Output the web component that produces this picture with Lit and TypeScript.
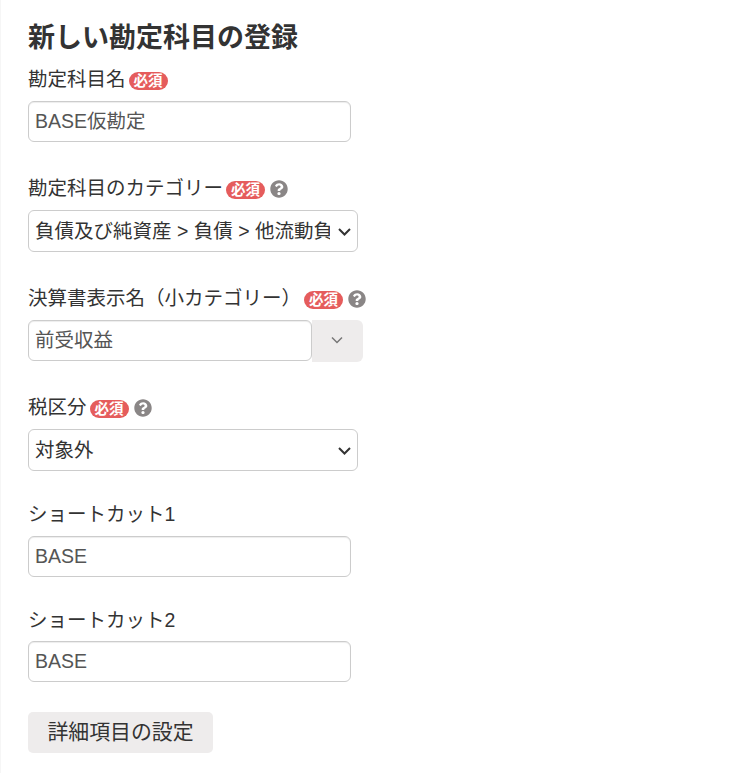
import { LitElement, html, css } from "lit";
import { customElement } from "lit/decorators.js";

@customElement("app-root")
export class AppRoot extends LitElement {
  static styles = css`
    :host {
      display: block;
      height: 773px;
      overflow: hidden;
      background: #fff;
      color: #333;
      font-family: "Liberation Sans", Arial, "Noto Sans CJK JP", sans-serif;
      font-size: 19.5px;
      box-sizing: border-box;
      padding: 21px 28px 0 27px;
      border-left: 1px solid #f6f6f6;
    }
    h1 {
      margin: 0 0 8px;
      font-size: 27px;
      line-height: 34px;
      font-weight: 700;
      color: #333;
    }
    .group { margin-bottom: 30px; }
    .group.after-select { margin-bottom: 31px; }
    label {
      display: flex;
      align-items: center;
      box-sizing: border-box;
      height: 31px;
      padding-top: 2px;
      line-height: 29px;
      margin-bottom: 7px;
      white-space: nowrap;
    }
    label.plain {
      height: 24px;
      padding-top: 0;
      line-height: 24px;
      margin-bottom: 10px;
    }
    label.plain.low {
      height: 26px;
      line-height: 26px;
      margin-bottom: 8px;
    }
    .badge {
      display: inline-flex;
      align-items: center;
      justify-content: center;
      width: 39px;
      height: 18px;
      border-radius: 9px;
      margin: 2px 0 0 3px;
      background: #e55c5c;
      color: #fff;
      font-size: 14.5px;
      font-weight: 700;
      line-height: 18px;
    }
    .help { display: block; margin-left: 5px; width: 18px; height: 18px; fill: #8a8686; }
    .input, select {
      display: block;
      box-sizing: border-box;
      font: inherit;
      border: 1px solid #ccc;
      border-radius: 6px;
      background-color: #fff;
      height: 41px;
      margin: 0;
      padding: 0 6px;
    }
    .input {
      width: 323px;
      color: #555;
      box-shadow: inset 0 1px 1px rgba(0, 0, 0, 0.075);
    }
    .input.cjk { padding-bottom: 4px; }
    .select-wrap { position: relative; width: 330px; }
    select {
      appearance: none;
      width: 330px;
      height: 42px;
      color: #333;
      padding-right: 27px;
    }
    .chevron {
      position: absolute;
      right: 7px;
      top: 18px;
      display: block;
      width: 13px;
      height: 8px;
      pointer-events: none;
    }
    .combo { display: flex; align-items: flex-start; height: 41px; }
    .combo .input { width: 284px; }
    .toggle {
      display: flex;
      align-items: center;
      justify-content: center;
      width: 51px;
      height: 42px;
      padding: 0 2px 2px 0;
      border: 0;
      border-radius: 0 6px 6px 0;
      background: #eeecec;
    }
    .toggle svg { display: block; width: 12px; height: 8px; }
    .detail {
      display: block;
      box-sizing: border-box;
      width: 185px;
      height: 41px;
      padding: 0 0 5px;
      border: 0;
      border-radius: 5px;
      background: #eeecec;
      color: #333;
      font-family: inherit;
      font-size: 20.9px;
    }
  `;

  private badge() {
    return html`<span class="badge">必須</span>`;
  }

  private help() {
    return html`<svg class="help" viewBox="0 0 512 512" aria-hidden="true">
      <path d="M504 256c0 136.997-111.043 248-248 248S8 392.997 8 256C8 119.083 119.043 8 256 8s248 111.083 248 248zM262.655 90c-54.497 0-89.255 22.957-116.549 63.758-3.536 5.286-2.353 12.415 2.715 16.258l34.699 26.31c5.205 3.947 12.621 3.008 16.665-2.122 17.864-22.658 30.113-35.797 57.303-35.797 20.429 0 45.698 13.148 45.698 32.958 0 14.976-12.363 22.667-32.534 33.976C247.128 238.528 216 254.941 216 296v4c0 6.627 5.373 12 12 12h56c6.627 0 12-5.373 12-12v-1.333c0-28.462 83.186-29.647 83.186-106.667 0-58.002-60.165-102-116.531-102zM256 338c-25.365 0-46 20.635-46 46 0 25.364 20.635 46 46 46s46-20.636 46-46c0-25.365-20.635-46-46-46z"></path>
    </svg>`;
  }

  private chevron() {
    return html`<svg class="chevron" viewBox="0 0 13 8" aria-hidden="true">
      <path d="M1 1 6.5 6.5 12 1" fill="none" stroke="#333" stroke-width="2"></path>
    </svg>`;
  }

  render() {
    return html`
      <h1>新しい勘定科目の登録</h1>
      <div class="group">
        <label>勘定科目名${this.badge()}</label>
        <input class="input cjk" value="BASE仮勘定" />
      </div>
      <div class="group">
        <label>勘定科目のカテゴリー${this.badge()}${this.help()}</label>
        <div class="select-wrap">
          <select><option>負債及び純資産 &gt; 負債 &gt; 他流動負債</option></select>
          ${this.chevron()}
        </div>
      </div>
      <div class="group">
        <label>決算書表示名（小カテゴリー）${this.badge()}${this.help()}</label>
        <div class="combo">
          <input class="input cjk" value="前受収益" />
          <button class="toggle" aria-label="開く">
            <svg viewBox="0 0 12 8"><path d="M1 1.5 6 6.5l5-5" fill="none" stroke="#777" stroke-width="1.5"></path></svg>
          </button>
        </div>
      </div>
      <div class="group after-select">
        <label>税区分${this.badge()}${this.help()}</label>
        <div class="select-wrap">
          <select><option>対象外</option></select>
          ${this.chevron()}
        </div>
      </div>
      <div class="group">
        <label class="plain">ショートカット1</label>
        <input class="input" value="BASE" />
      </div>
      <div class="group">
        <label class="plain low">ショートカット2</label>
        <input class="input" value="BASE" />
      </div>
      <button class="detail">詳細項目の設定</button>
    `;
  }
}
